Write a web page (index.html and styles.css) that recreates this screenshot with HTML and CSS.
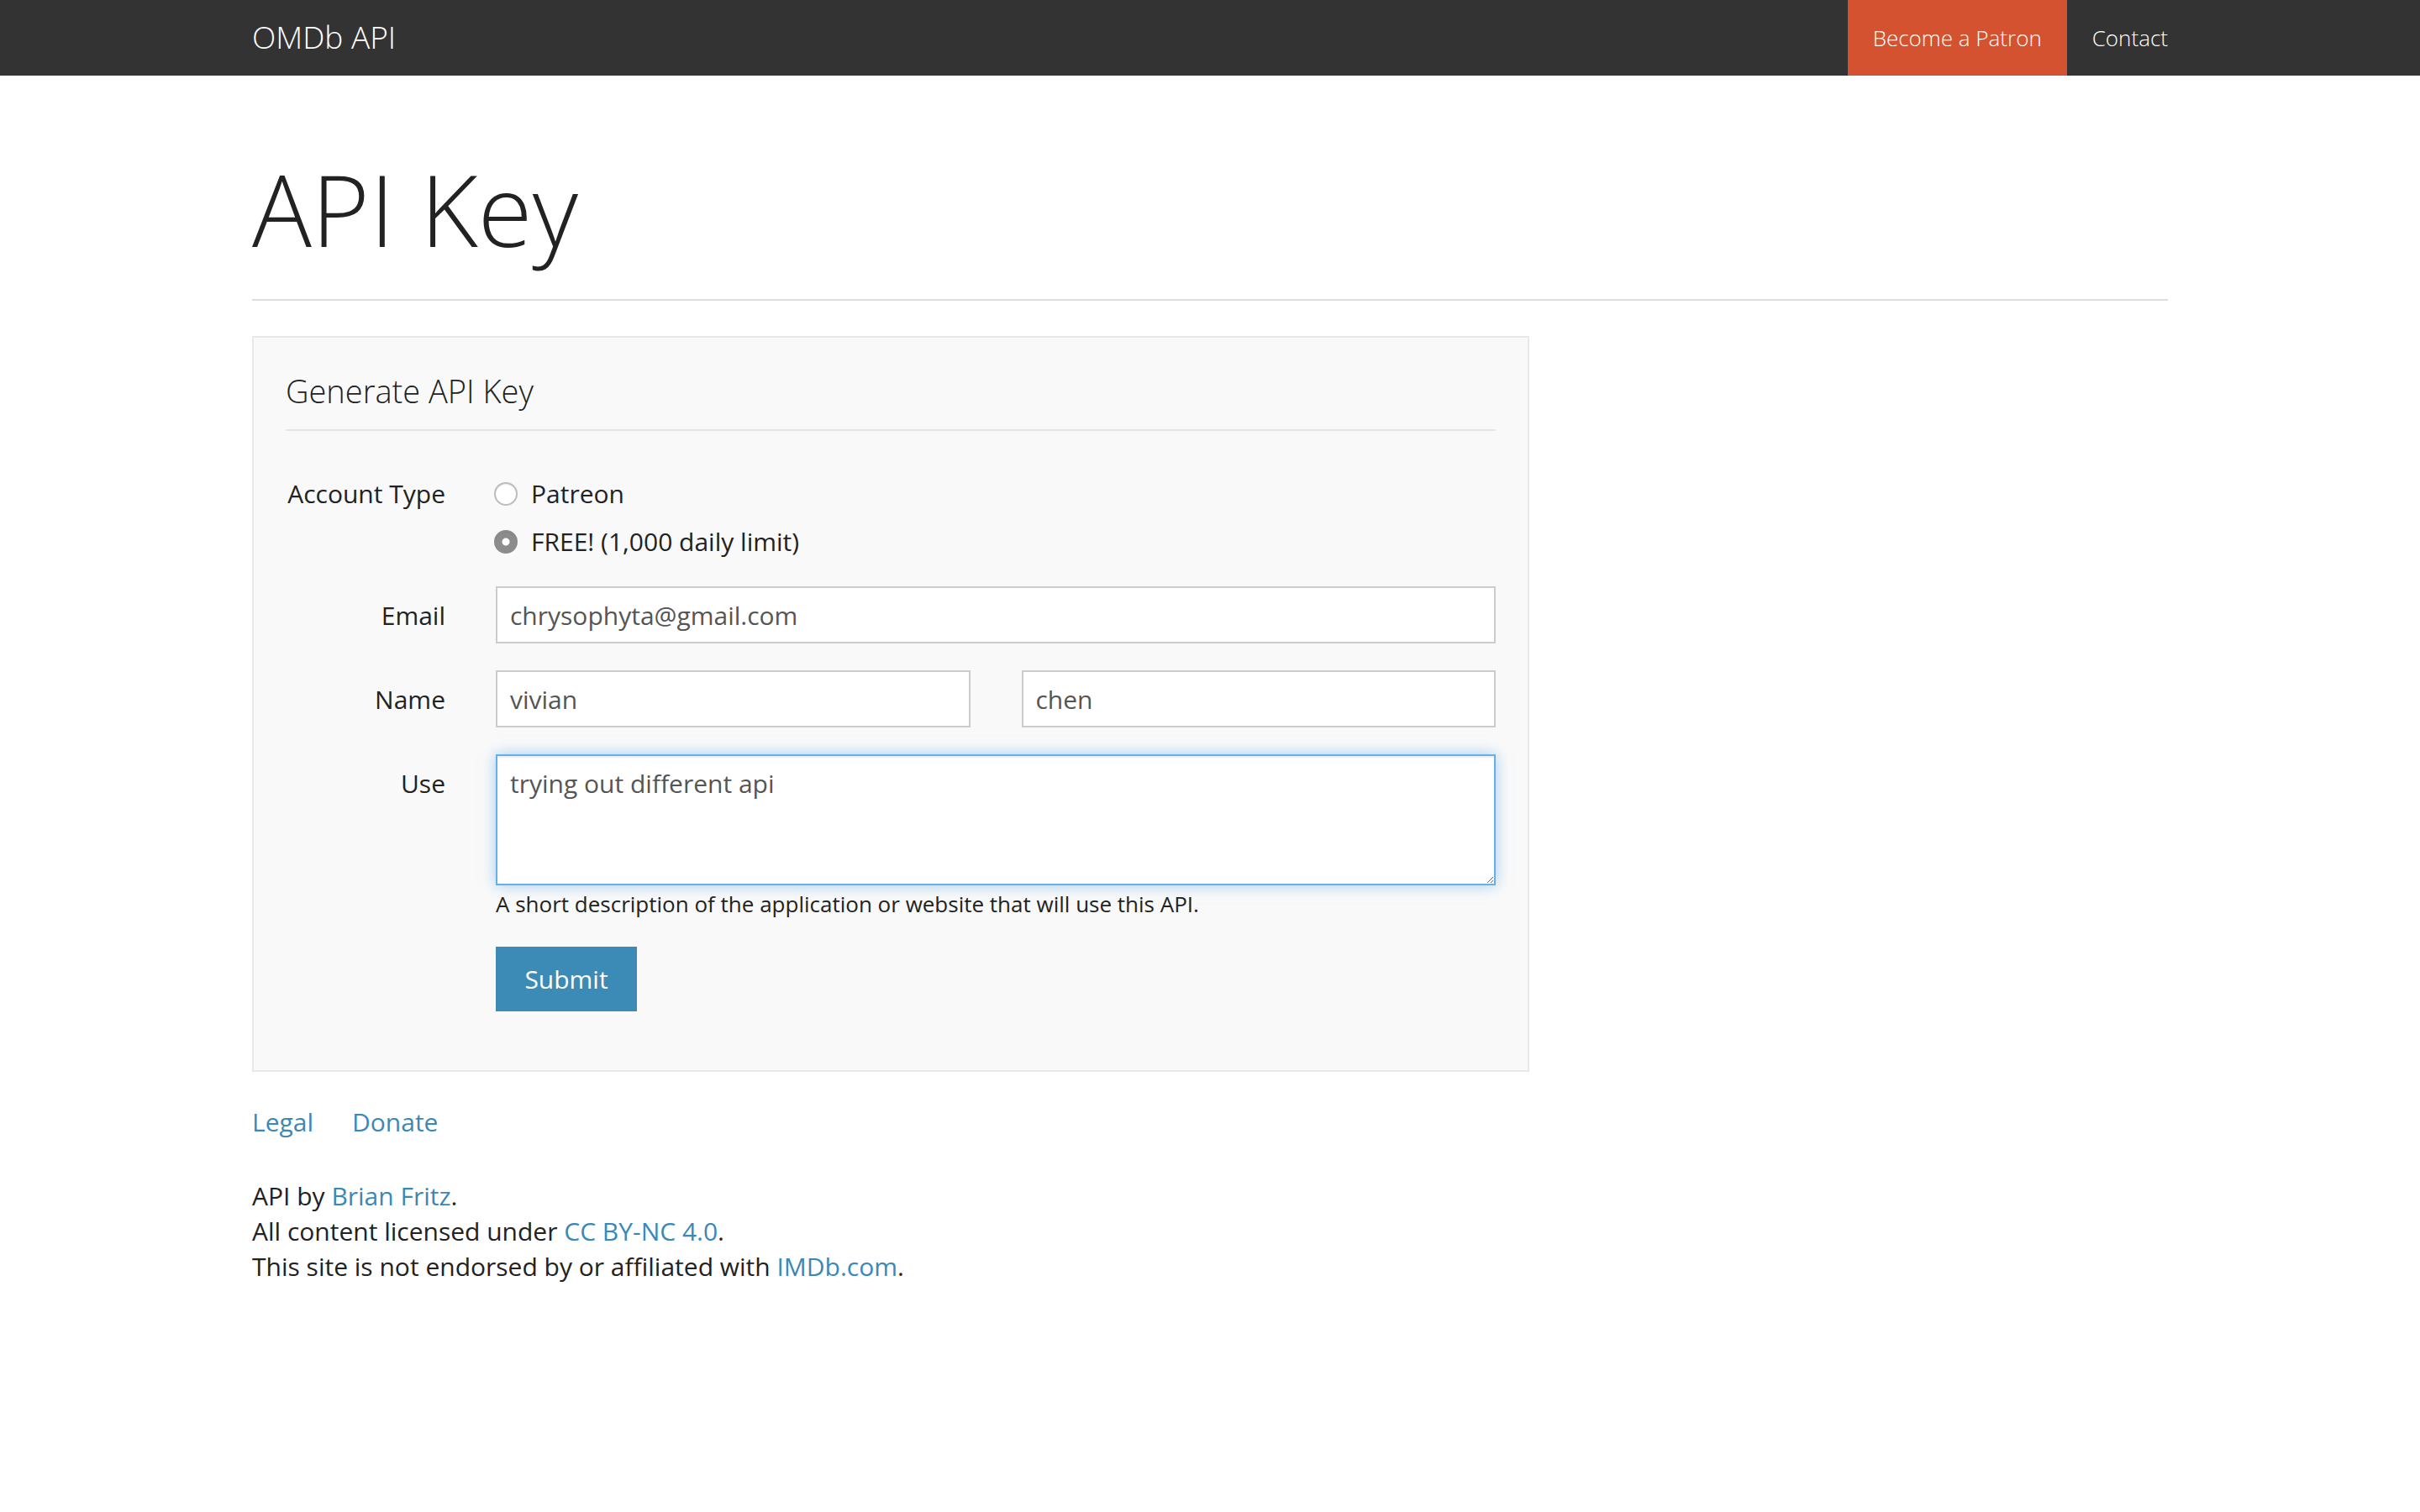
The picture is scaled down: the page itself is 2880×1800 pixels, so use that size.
FILE: index.html
```html
<!DOCTYPE html>
<html lang="en">
<head>
<meta charset="utf-8">
<title>OMDb API - API Key</title>
<link rel="stylesheet" href="styles.css">
</head>
<body>
<nav class="navbar">
  <div class="container navbar-inner">
    <a class="brand" href="#">OMDb API</a>
    <ul class="nav">
      <li><a class="nav-link patron" href="#">Become a Patron</a></li>
      <li><a class="nav-link" href="#">Contact</a></li>
    </ul>
  </div>
</nav>
<main class="container">
  <div class="page-header"><h1>API Key</h1></div>
  <div class="well">
    <form class="form">
      <fieldset class="fieldset">
        <legend class="legend">Generate API Key</legend>
        <div class="form-row">
          <span class="control-label">Account Type</span>
          <div class="radios">
            <label class="radio"><input class="radio-input" type="radio" name="type" value="patreon">Patreon</label>
            <label class="radio"><input class="radio-input" type="radio" name="type" value="free" checked>FREE! (1,000 daily limit)</label>
          </div>
        </div>
        <div class="form-row">
          <label class="control-label" for="email">Email</label>
          <input class="form-control" id="email" type="text" value="chrysophyta@gmail.com">
        </div>
        <div class="form-row">
          <label class="control-label" for="first">Name</label>
          <div class="name-pair">
            <input class="form-control" id="first" type="text" value="vivian">
            <input class="form-control" id="last" type="text" value="chen">
          </div>
        </div>
        <div class="form-row">
          <label class="control-label" for="use">Use</label>
          <div class="field">
            <textarea class="form-control textarea" id="use">trying out different api</textarea>
            <p class="help">A short description of the application or website that will use this API.</p>
            <button class="btn" type="button">Submit</button>
          </div>
        </div>
      </fieldset>
    </form>
  </div>
  <footer class="footer">
    <ul class="footer-links">
      <li><a href="#">Legal</a></li>
      <li><a href="#">Donate</a></li>
    </ul>
    <p class="credits">API by <a href="#">Brian Fritz</a>.<br>All content licensed under <a href="#">CC BY-NC 4.0</a>.<br>This site is not endorsed by or affiliated with <a href="#">IMDb.com</a>.</p>
  </footer>
</main>
</body>
</html>
```

FILE: styles.css
```css
* { box-sizing: border-box; }

html, body {
  margin: 0;
  padding: 0;
  background: #fff;
}

body {
  font-family: "Open Sans", "Noto Sans", "Liberation Sans", sans-serif;
  font-size: 30px;
  line-height: 42px;
  color: #222;
}

a { color: #3a88b8; text-decoration: none; }

.container {
  width: 2280px;
  margin: 0 auto;
}

/* navbar */
.navbar {
  background: #333;
  height: 90px;
}
.navbar-inner {
  display: flex;
  justify-content: space-between;
  align-items: stretch;
  height: 90px;
}
.brand {
  color: #fff;
  font-size: 37px;
  font-weight: 300;
  line-height: 88px;
}
.nav {
  display: flex;
  list-style: none;
  margin: 0 -30px 0 0;
  padding: 0;
}
.nav-link {
  display: block;
  color: #fff;
  font-size: 26px;
  font-weight: 300;
  line-height: 90px;
  padding: 0 30px;
}
.patron { background: #d4522f; }

/* header */
.page-header {
  margin: 92px 0 42px;
  padding-bottom: 40px;
  border-bottom: 2px solid #ddd;
}
.page-header h1 {
  margin: 0;
  font-size: 118px;
  font-weight: 300;
  line-height: 134px;
  color: #222;
}

/* well */
.well {
  width: 1520px;
  background: #f9f9f9;
  border: 2px solid #e8e8e8;
  padding: 38px 38px 70px;
}
.form, .fieldset { margin: 0; padding: 0; border: 0; min-width: 0; }
.legend {
  display: block;
  width: 100%;
  padding: 0 0 20px;
  margin: 0 0 40px;
  font-size: 38px;
  font-weight: 300;
  line-height: 51px;
  color: #222;
  border-bottom: 2px solid #e5e5e5;
}

.form-row {
  display: grid;
  grid-template-columns: 190px 1fr;
  column-gap: 60px;
  margin-bottom: 32px;
}
.form-row:last-child { margin-bottom: 0; }

.control-label {
  text-align: right;
  padding-top: 14px;
  line-height: 42px;
  color: #222;
}

.radios {
  display: flex;
  flex-direction: column;
  gap: 15px;
  padding-top: 14px;
}
.radio {
  display: flex;
  align-items: center;
  line-height: 42px;
  color: #222;
}
.radio-input {
  appearance: none;
  -webkit-appearance: none;
  width: 28px;
  height: 28px;
  margin: 0 16px 0 -2px;
  border-radius: 50%;
  border: 2px solid #bdbdbd;
  background: #fff;
  box-shadow: inset 0 1px 1px rgba(0,0,0,.08);
}
.radio-input:checked {
  border-color: #8c8c8c;
  background: radial-gradient(circle, #fff 0 4px, #8c8c8c 5px);
}

.form-control {
  display: block;
  width: 100%;
  height: 68px;
  padding: 0 15px;
  font-family: inherit;
  font-size: 30px;
  line-height: 42px;
  color: #555;
  background: #fff;
  border: 2px solid #ccc;
  border-radius: 0;
  outline: none;
}
.name-pair {
  display: grid;
  grid-template-columns: 1fr 1fr;
  column-gap: 61px;
}
.textarea {
  height: 156px;
  padding: 12px 15px;
  border-color: #66afe9;
  box-shadow: inset 0 2px 2px rgba(0,0,0,.075), 0 0 16px rgba(102,175,233,.6);
}

.help {
  margin: 4px 0 0;
  font-size: 26px;
  line-height: 36px;
  color: #222;
}

.btn {
  display: block;
  margin-top: 33px;
  width: 168px;
  height: 77px;
  padding: 0;
  font-family: inherit;
  font-size: 30px;
  color: #fff;
  background: #3c8bb6;
  border: 0;
  border-radius: 0;
}

/* footer */
.footer { margin-top: 39px; }
.footer-links {
  display: flex;
  gap: 46px;
  list-style: none;
  margin: 0;
  padding: 0;
}
.credits { margin: 46px 0 0; }
```
